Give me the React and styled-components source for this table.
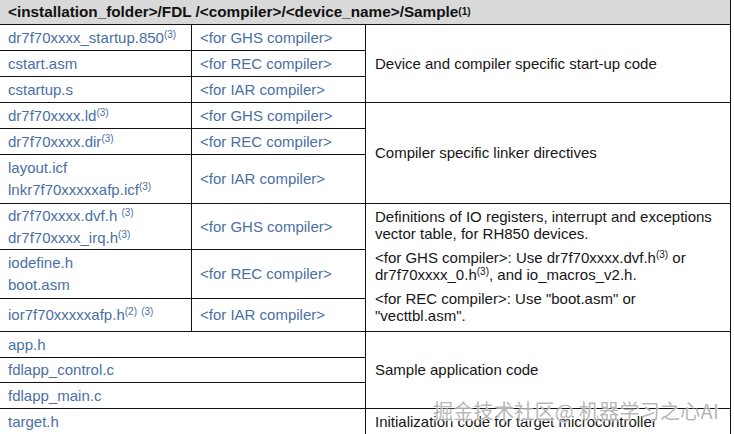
import React from "react";
import styled, { createGlobalStyle } from "styled-components";

const Global = createGlobalStyle`
  html, body { margin: 0; padding: 0; background: #fff; overflow: hidden; }
  body { font-family: "Liberation Sans", Arial, sans-serif; }
`;

const Page = styled.div`
  position: relative;
  width: 734px;
  height: 434px;
  overflow: hidden;
  background: #fff;
`;

const Table = styled.div`
  display: grid;
  grid-template-columns: 191px 173px 364px;
  grid-template-rows: 24px 25px 25px 25px 25px 25px 48px 45px 48px 32px 25px 24px 25px 25px;
  gap: 1px;
  width: 730px;
  background: #111;
  border-right: 1px solid #111;
`;

const Header = styled.div`
  grid-column: 1 / -1;
  background: #d9d9d9;
  display: flex;
  align-items: center;
  padding-left: 8px;
  font-size: 15.3px;
  font-weight: bold;
  color: #111;
`;

const Cell = styled.div`
  background: #fff;
  display: flex;
  flex-direction: column;
  justify-content: center;
  padding: 0 8px ${(p) => (p.$tight ? "4px" : "0")};
  font-size: 15px;
  line-height: ${(p) => (p.$tight ? "17px" : "22px")};
  color: ${(p) => (p.$desc ? "#161616" : "#4a6fa5")};
  grid-column: ${(p) => (p.$wide ? "span 2" : "auto")};
  grid-row: ${(p) => (p.$rows ? `span ${p.$rows}` : "auto")};
  white-space: nowrap;
  padding-left: ${(p) => (p.$desc ? "9px" : "8px")};
`;

const Para = styled.div`
  & + & { margin-top: 7px; }
`;

const Sup = styled.sup`
  font-size: 10px;
  line-height: 0;
  vertical-align: 5px;
`;

const Watermark = styled.div`
  position: absolute;
  left: 433px;
  top: 396px;
  font-family: "Noto Sans CJK SC", "Liberation Sans", sans-serif;
  font-size: 20px;
  letter-spacing: 0.3px;
  color: rgba(120, 120, 120, 0.55);
  text-shadow: 0 0 1px rgba(255,255,255,0.9), 1px 1px 0 rgba(255,255,255,0.6);
  white-space: nowrap;
  pointer-events: none;
`;

const S = ({ n }) => <Sup>({n})</Sup>;

export default function App() {
  return (
    <Page>
      <Global />
      <Table>
        <Header>
          &lt;installation_folder&gt;/FDL /&lt;compiler&gt;/&lt;device_name&gt;/Sample<S n="1" />
        </Header>

        <Cell>
          <span>dr7f70xxxx_startup.850<S n="3" /></span>
        </Cell>
        <Cell>&lt;for GHS compiler&gt;</Cell>
        <Cell $desc $rows={3}>Device and compiler specific start-up code</Cell>
        <Cell>cstart.asm</Cell>
        <Cell>&lt;for REC compiler&gt;</Cell>
        <Cell>cstartup.s</Cell>
        <Cell>&lt;for IAR compiler&gt;</Cell>

        <Cell>
          <span>dr7f70xxxx.ld<S n="3" /></span>
        </Cell>
        <Cell>&lt;for GHS compiler&gt;</Cell>
        <Cell $desc $rows={3}>Compiler specific linker directives</Cell>
        <Cell>
          <span>dr7f70xxxx.dir<S n="3" /></span>
        </Cell>
        <Cell>&lt;for REC compiler&gt;</Cell>
        <Cell>
          <span>layout.icf</span>
          <span>lnkr7f70xxxxxafp.icf<S n="3" /></span>
        </Cell>
        <Cell>&lt;for IAR compiler&gt;</Cell>

        <Cell>
          <span>dr7f70xxxx.dvf.h <S n="3" /></span>
          <span>dr7f70xxxx_irq.h<S n="3" /></span>
        </Cell>
        <Cell>&lt;for GHS compiler&gt;</Cell>
        <Cell $desc $tight $rows={3}>
          <Para>
            Definitions of IO registers, interrupt and exceptions
            <br />
            vector table, for RH850 devices.
          </Para>
          <Para>
            &lt;for GHS compiler&gt;: Use dr7f70xxxx.dvf.h<S n="3" /> or
            <br />
            dr7f70xxxx_0.h<S n="3" />, and io_macros_v2.h.
          </Para>
          <Para>
            &lt;for REC compiler&gt;: Use "boot.asm" or
            <br />
            "vecttbl.asm".
          </Para>
        </Cell>
        <Cell>
          <span>iodefine.h</span>
          <span>boot.asm</span>
        </Cell>
        <Cell>&lt;for REC compiler&gt;</Cell>
        <Cell>
          <span>ior7f70xxxxxafp.h<S n="2" /> <S n="3" /></span>
        </Cell>
        <Cell>&lt;for IAR compiler&gt;</Cell>

        <Cell $wide>app.h</Cell>
        <Cell $desc $rows={3}>Sample application code</Cell>
        <Cell $wide>fdlapp_control.c</Cell>
        <Cell $wide>fdlapp_main.c</Cell>

        <Cell $wide>target.h</Cell>
        <Cell $desc>Initialization code for target microcontroller</Cell>
      </Table>
      <Watermark>掘金技术社区@ 机器学习之心AI</Watermark>
    </Page>
  );
}
